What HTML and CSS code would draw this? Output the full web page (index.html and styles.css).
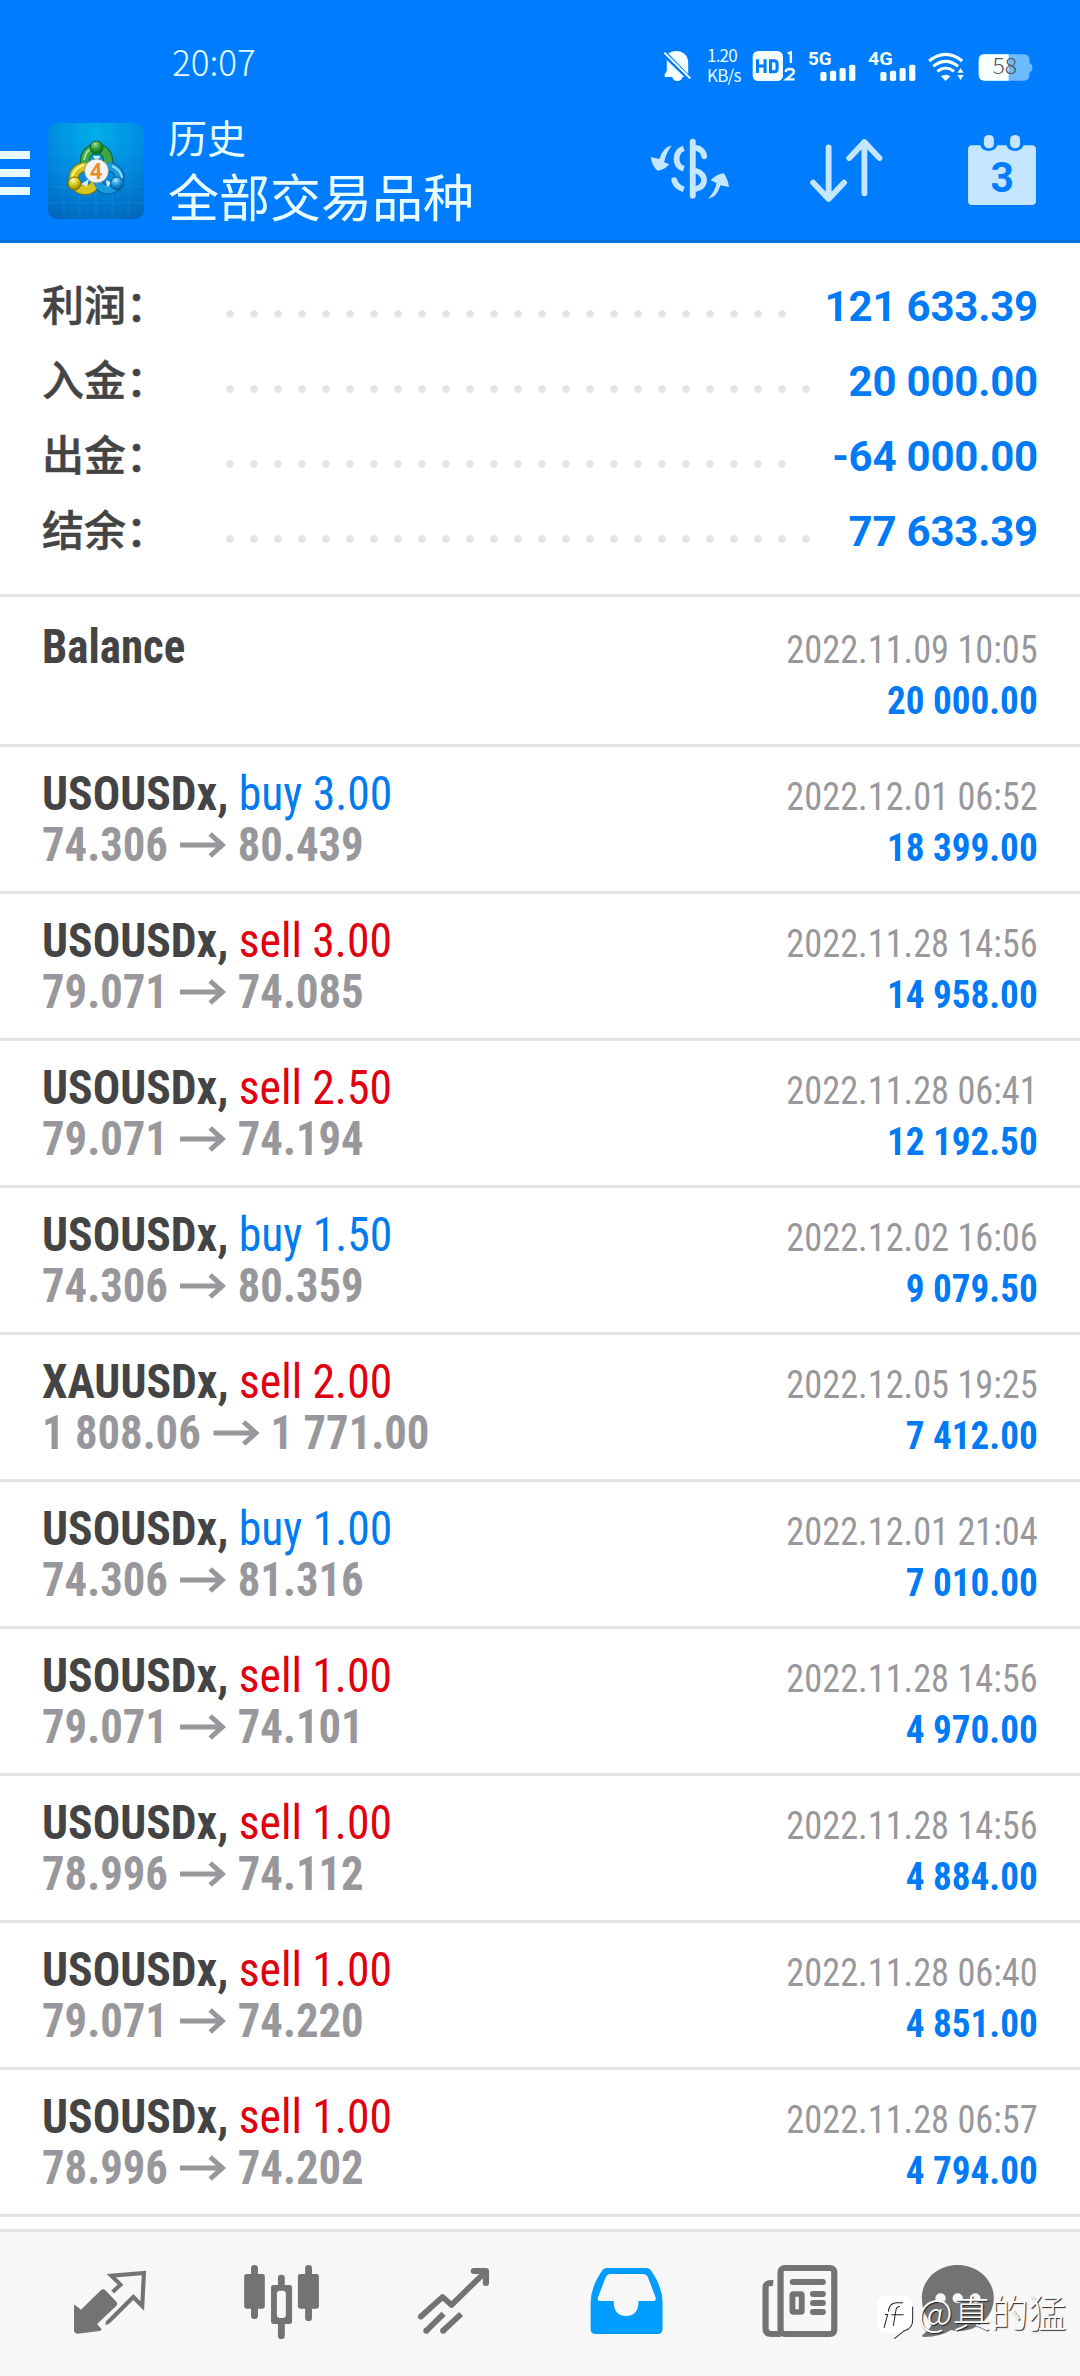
FILE: index.html
```html
<!DOCTYPE html>
<html lang="zh-CN">
<head>
<meta charset="utf-8">
<title>历史</title>
<link rel="stylesheet" href="styles.css">
</head>
<body>
<header class="header">
  <div class="statusbar">
    <span class="clock">20:07</span>
    <div class="status-icons">
      <svg class="i-bell" viewBox="355 150 84 96" preserveAspectRatio="none"><path fill="#f4feff" d="M370 160q26-14 45 0q13 9 13 30v32zM366 180v30q0 8-6 12v9h22q2 12 15 12q12 0 14-12h6z"/><path d="M359 158l75 77" stroke="#f4feff" stroke-width="6"/></svg>
      <div class="speed"><span>1.20</span><span>KB/s</span></div>
      <svg class="i-hd" viewBox="616 150 128 96" preserveAspectRatio="none"><rect x="618" y="153" width="88" height="90" rx="16" fill="#f4feff"/><path d="M632 178v41M654 178v41M632 198h22M670 182v33h10q9 0 9-9v-15q0-9-9-9z" fill="none" stroke="#007dff" stroke-width="9"/><path d="M720 160l9-3v32M714 216q0-9 12-9t12 8q0 6-8 11l-14 12h24" fill="none" stroke="#f4feff" stroke-width="7"/></svg>
      <svg class="i-sig" viewBox="774 150 140 96" preserveAspectRatio="none"><text x="774" y="196" class="net" textLength="69" lengthAdjust="spacingAndGlyphs">5G</text><g fill="#f4feff"><rect x="810" y="216" width="18" height="27" rx="5"/><rect x="838" y="212" width="18" height="31" rx="5"/><rect x="866" y="204" width="18" height="39" rx="5"/><rect x="894" y="194" width="18" height="49" rx="5"/></g></svg>
      <svg class="i-sig" viewBox="774 150 140 96" preserveAspectRatio="none"><text x="774" y="196" class="net" textLength="72" lengthAdjust="spacingAndGlyphs">4G</text><g fill="#f4feff"><rect x="810" y="216" width="18" height="27" rx="5"/><rect x="838" y="212" width="18" height="31" rx="5"/><rect x="866" y="204" width="18" height="39" rx="5"/><rect x="894" y="194" width="18" height="49" rx="5"/></g></svg>
      <svg class="i-wifi" viewBox="1122 150 110 96" preserveAspectRatio="none"><g fill="none" stroke="#f4feff" stroke-width="9"><path d="M1128 183q48-40 96 0"/><path d="M1140 199q36-30 72 0"/><path d="M1152 214q24-20 48 0"/></g><path fill="#f4feff" d="M1162 229q14-10 28 0l-14 14zM1210 218l9-14 9 14zM1210 225h18l-9 15z"/></svg>
      <svg class="i-bat" viewBox="1270 158 160 88" preserveAspectRatio="none"><path d="M1290 162h112q18 0 18 18v10q8 0 8 12q0 14-8 14v8q0 18-18 18h-112q-18 0-18-18v-44q0-18 18-18z" fill="#6dbbff"/><path d="M1359 162h-69q-18 0-18 18v44q0 18 18 18h69z" fill="#f8ffff"/><text x="1312" y="221" class="pct" textLength="72" lengthAdjust="spacingAndGlyphs">58</text></svg>
    </div>
  </div>
  <div class="toolbar">
    <div class="burger"><i></i><i></i><i></i></div>
    <svg class="appicon" viewBox="0 0 96 96">
      <defs>
        <radialGradient id="bg" cx=".5" cy=".08" r="1"><stop offset="0" stop-color="#00aeea"/><stop offset=".5" stop-color="#008be0"/><stop offset="1" stop-color="#0067bd"/></radialGradient>
        <radialGradient id="gr" cx=".4" cy=".25" r=".8"><stop offset="0" stop-color="#a4e09a"/><stop offset=".5" stop-color="#2a9a34"/><stop offset="1" stop-color="#0c5c18"/></radialGradient>
        <radialGradient id="ye" cx=".4" cy=".25" r=".8"><stop offset="0" stop-color="#fffbb0"/><stop offset=".5" stop-color="#d4c410"/><stop offset="1" stop-color="#7d7000"/></radialGradient>
        <radialGradient id="bl" cx=".4" cy=".25" r=".8"><stop offset="0" stop-color="#a5e2ff"/><stop offset=".5" stop-color="#1693dc"/><stop offset="1" stop-color="#05508f"/></radialGradient>
      </defs>
      <rect width="96" height="96" rx="9" fill="url(#bg)"/>
      <path d="M16 0v96M32 0v96M48 0v96M64 0v96M80 0v96M0 16h96M0 32h96M0 48h96M0 64h96M0 80h96" stroke="#55c8ff" stroke-opacity=".13" stroke-width="1"/>
      <g fill="none">
        <g stroke-width="10"><circle cx="48.500" cy="37" r="11.500" stroke="#0b6424"/><circle cx="37" cy="55.500" r="11.500" stroke="#77740d"/><circle cx="60" cy="55" r="11.500" stroke="#075b98"/></g>
        <g stroke-width="8"><circle cx="48.500" cy="37" r="11.500" stroke="#3fa548"/><circle cx="37" cy="55.500" r="11.500" stroke="#d6c51b"/><circle cx="60" cy="55" r="11.500" stroke="#1a9ade"/></g>
        <path d="M36 37q2-11 10-12" stroke="#9fe0a0" stroke-width="2"/><path d="M24 54q3-10 12-12" stroke="#fff79a" stroke-width="2"/><path d="M64 43q9 4 10 12" stroke="#8fdcff" stroke-width="2"/>
      </g>
      <path d="M45 33l3.500 6 4-6zM33 61l8-5-2 8zM58 57l6 3-5 4z" fill="#fff" fill-opacity=".85"/>
      <g stroke-width="1">
        <circle cx="48.500" cy="24.500" r="6.500" fill="url(#gr)" stroke="#0b6424"/>
        <circle cx="26.500" cy="60.500" r="6.500" fill="url(#ye)" stroke="#77740d"/>
        <circle cx="69" cy="60.500" r="6.500" fill="url(#bl)" stroke="#075b98"/>
      </g>
      <circle cx="48.500" cy="48" r="12" fill="#f1f3f5" stroke="#888" stroke-width=".7"/>
      <text x="48" y="56" class="four">4</text>
    </svg>
    <div class="titles"><span class="t1">历史</span><span class="t2">全部交易品种</span></div>
    <svg class="i-dollar" viewBox="320 415 232 186" preserveAspectRatio="none"><g fill="none" stroke="#c4e6ff" stroke-width="17"><path d="M444 426v162" stroke-linecap="round"/><path d="M450 444q25 4 27 26" stroke-linecap="round"/><path d="M418 446q-21 7-21 31t21 30M418 569q-22-7-28-28"/><path d="M450 512q27 9 27 30t-27 27"/></g><circle cx="390" cy="541" r="8" fill="#c4e6ff"/><path fill="#c4e6ff" d="M383 438q-24 2-36 40l-25-6q3 26 20 41q20-2 34-19l-15-6q4-26 22-50zM488 597q26-2 36-40l25 5q-3-24-15-41q-22 3-38 21l17 8q-4 26-25 47z"/></svg>
    <svg class="i-sort" viewBox="780 415 218 194" preserveAspectRatio="none"><path d="M837 443v150M792 548l45 49 45-49M941 580V430M897 475l44-48 44 48" fill="none" stroke="#c4e6ff" stroke-width="17" stroke-linecap="round" stroke-linejoin="round"/></svg>
    <svg class="i-cal" viewBox="1240 402 203 216" preserveAspectRatio="none"><path fill="#c4e6ff" d="M1255 436h23q6 17 25 17t25-17h26q6 17 25 17t25-17h24q12 0 12 12v155q0 12-12 12h-173q-12 0-12-12v-155q0-12 12-12z"/><rect x="1289" y="405" width="29" height="40" rx="14" fill="#c4e6ff"/><rect x="1365" y="405" width="29" height="40" rx="14" fill="#c4e6ff"/><text x="1308" y="577" class="day" textLength="68" lengthAdjust="spacingAndGlyphs">3</text></svg>
  </div>
</header>
<section class="summary">
  <div class="sum"><b>利润：</b><i></i><strong>121 633.39</strong></div>
  <div class="sum"><b>入金：</b><i></i><strong>20 000.00</strong></div>
  <div class="sum"><b>出金：</b><i></i><strong>-64 000.00</strong></div>
  <div class="sum"><b>结余：</b><i></i><strong>77 633.39</strong></div>
</section>
<svg class="defs" width="0" height="0"><symbol id="arrow" viewBox="0 0 46 26" preserveAspectRatio="none"><path d="M0 13h42M30 2l12 11-12 11" fill="none" stroke="currentColor" stroke-width="5"/></symbol></svg>
<main class="list">
  <div class="row first"><div class="l"><p class="op"><b>Balance</b></p></div><div class="r"><p class="date">2022.11.09 10:05</p><p class="amt">20 000.00</p></div></div>
  <div class="row"><div class="l"><p class="deal"><b>USOUSDx,</b> <span class="buy">buy 3.00</span></p><p class="price">74.306<svg><use href="#arrow"/></svg>80.439</p></div><div class="r"><p class="date">2022.12.01 06:52</p><p class="amt">18 399.00</p></div></div>
  <div class="row"><div class="l"><p class="deal"><b>USOUSDx,</b> <span class="sell">sell 3.00</span></p><p class="price">79.071<svg><use href="#arrow"/></svg>74.085</p></div><div class="r"><p class="date">2022.11.28 14:56</p><p class="amt">14 958.00</p></div></div>
  <div class="row"><div class="l"><p class="deal"><b>USOUSDx,</b> <span class="sell">sell 2.50</span></p><p class="price">79.071<svg><use href="#arrow"/></svg>74.194</p></div><div class="r"><p class="date">2022.11.28 06:41</p><p class="amt">12 192.50</p></div></div>
  <div class="row"><div class="l"><p class="deal"><b>USOUSDx,</b> <span class="buy">buy 1.50</span></p><p class="price">74.306<svg><use href="#arrow"/></svg>80.359</p></div><div class="r"><p class="date">2022.12.02 16:06</p><p class="amt">9 079.50</p></div></div>
  <div class="row"><div class="l"><p class="deal"><b>XAUUSDx,</b> <span class="sell">sell 2.00</span></p><p class="price">1 808.06<svg><use href="#arrow"/></svg>1 771.00</p></div><div class="r"><p class="date">2022.12.05 19:25</p><p class="amt">7 412.00</p></div></div>
  <div class="row"><div class="l"><p class="deal"><b>USOUSDx,</b> <span class="buy">buy 1.00</span></p><p class="price">74.306<svg><use href="#arrow"/></svg>81.316</p></div><div class="r"><p class="date">2022.12.01 21:04</p><p class="amt">7 010.00</p></div></div>
  <div class="row"><div class="l"><p class="deal"><b>USOUSDx,</b> <span class="sell">sell 1.00</span></p><p class="price">79.071<svg><use href="#arrow"/></svg>74.101</p></div><div class="r"><p class="date">2022.11.28 14:56</p><p class="amt">4 970.00</p></div></div>
  <div class="row"><div class="l"><p class="deal"><b>USOUSDx,</b> <span class="sell">sell 1.00</span></p><p class="price">78.996<svg><use href="#arrow"/></svg>74.112</p></div><div class="r"><p class="date">2022.11.28 14:56</p><p class="amt">4 884.00</p></div></div>
  <div class="row"><div class="l"><p class="deal"><b>USOUSDx,</b> <span class="sell">sell 1.00</span></p><p class="price">79.071<svg><use href="#arrow"/></svg>74.220</p></div><div class="r"><p class="date">2022.11.28 06:40</p><p class="amt">4 851.00</p></div></div>
  <div class="row"><div class="l"><p class="deal"><b>USOUSDx,</b> <span class="sell">sell 1.00</span></p><p class="price">78.996<svg><use href="#arrow"/></svg>74.202</p></div><div class="r"><p class="date">2022.11.28 06:57</p><p class="amt">4 794.00</p></div></div>
</main>
<nav class="tabs">
  <svg viewBox="0 126 522.670 432" preserveAspectRatio="none"><path fill="#737373" d="M215 344q3 0 20 15l58-58q6-7 13 0l32 34q5 6 0 12l-56 55 13 16q0 4-6 5l-64 8q-10 0-10-10z"/><path d="M327 306l23-22-27-27 95-8-5 99-26-27-70 72q-4 6-10 5" fill="none" stroke="#737373" stroke-width="12"/></svg>
  <svg viewBox="522.670 126 522.670 432" preserveAspectRatio="none"><g fill="#737373"><rect x="709" y="252" width="60" height="104" rx="7"/><rect x="729" y="225" width="20" height="162" rx="10"/><rect x="865" y="252" width="61" height="104" rx="7"/><rect x="886" y="225" width="20" height="168" rx="10"/><rect x="787" y="285" width="61" height="117" rx="7"/><rect x="807" y="254" width="20" height="193" rx="10"/></g><rect x="804" y="302" width="26" height="82" rx="9" fill="#f7f7f7"/></svg>
  <svg viewBox="1045.330 126 522.670 432" preserveAspectRatio="none"><g fill="none" stroke="#737373" stroke-width="17"><path d="M1222 380l63-59 26 24 98-99" stroke-linejoin="round" stroke-linecap="round"/><path d="M1376 243h35v36" stroke-linecap="round" stroke-linejoin="round" stroke-width="18"/><path d="M1288 371l-50 51M1339 372l-52 50"/></g><circle cx="1238" cy="422" r="9" fill="#737373"/><circle cx="1287" cy="422" r="9" fill="#737373"/></svg>
  <svg viewBox="0 126 522.670 432" preserveAspectRatio="none"><path fill="#009dff" d="M194 234h114q10 0 16 10q32 48 32 95v78q0 15-14 15H161q-14 0-14-15v-78q0-47 32-95q6-10 15-10z"/><path fill="#f7f7f7" d="M203 252h94q12 0 16 9l23 62q2 10-8 10h-42q0 45-36 45t-36-45h-38q-10 0-8-10l23-62q4-9 12-9z"/></svg>
  <svg viewBox="522.670 126 522.670 432" preserveAspectRatio="none"><g fill="none" stroke="#737373"><rect x="698.500" y="234" width="156" height="198" rx="12" stroke-width="18"/><path d="M677 279q-22-2-22 14v122q0 17 16 17h28" stroke-width="18"/><path d="M734 276h87M793 312h28M793 339h28M793 366h28" stroke-width="18" stroke-linecap="round"/><rect x="733" y="312" width="27" height="54" rx="3" stroke-width="17"/></g></svg>
  <svg viewBox="1045.330 126 522.670 432" preserveAspectRatio="none"><path transform="translate(522.670)" fill="#737373" d="M690 225c58 0 105 44 105 99s-45 99-100 99q-12 0-24-3q-30 20-77 21q-12-1-4-8q18-14 26-31q-30-30-30-78c0-55 46-99 104-99z" class="bubble"/><g fill="#f7f7f7"><circle cx="1163" cy="325" r="15"/><circle cx="1213" cy="325" r="15"/><circle cx="1264" cy="325" r="15"/></g></svg>
</nav>
<div class="watermark">
  <svg viewBox="20 136 114 134" preserveAspectRatio="none"><path fill="#fff" d="M48 139h52q30 0 30 32v38q0 26-26 34l-28 23 4-16H52q-30 0-30-32v-44q0-35 26-35z"/><path d="M44 234l11-40h-8M57 186q2-26 24-27h20M66 195h37M92 170q-10 0-12 10l-8 48M130 170v42q0 24-26 31l-29 23" fill="none" stroke="#222" stroke-width="3"/></svg>
  <span>@真的猛</span>
</div>
</body>
</html>
```
FILE: styles.css
```css
* { box-sizing: border-box; margin: 0; padding: 0; }
body {
  width: 1080px; height: 2376px; position: relative; overflow: hidden;
  display: flex; flex-direction: column;
  background: #fff; color: #444;
  font-family: Roboto, "Noto Sans CJK SC", sans-serif;
}
svg { display: block; flex: none; overflow: visible; }
.defs { position: absolute; }

.header { height: 243px; flex: none; background: #007dff; border-bottom: 3px solid #0070d6; }
.statusbar { height: 100px; padding: 0 47px 0 172px; display: flex; justify-content: space-between; }
.clock { font: 300 35px/50px "Noto Sans CJK SC", sans-serif; color: #e2fcff; padding-top: 36px; }
.status-icons { display: flex; align-items: flex-start; padding-top: 50px; }
.i-bell { width: 29px; height: 32px; }
.speed {
  width: 31px; margin: -5px 0 0 15px; display: flex; flex-direction: column;
  font: 400 17px/20px "Noto Sans CJK SC", sans-serif; letter-spacing: -.8px; color: #e2fcff; white-space: nowrap;
}
.i-hd { width: 44px; height: 32px; margin-left: 14px; }
.i-sig { width: 48px; height: 32px; margin-left: 12px; }
.i-wifi { width: 38px; height: 32px; margin-left: 11px; }
.i-bat { width: 55px; height: 29px; margin: 3px 0 0 13px; }
.net { font: 700 56px Roboto, sans-serif; fill: #f4feff; }
.pct { font: 300 66px "Noto Sans CJK SC", sans-serif; fill: #555; }

.toolbar { height: 140px; display: flex; align-items: flex-start; }
.burger { width: 30px; padding-top: 51px; display: flex; flex-direction: column; gap: 10px; }
.burger i { height: 8px; background: #e8fbff; }
.appicon { width: 96px; height: 96px; margin: 23px 0 0 18px; }
.four { font: 700 22px Roboto, sans-serif; fill: #f28c28; text-anchor: middle; }
.titles { width: 340px; margin-left: 24px; padding-top: 9px; display: flex; flex-direction: column; font-family: "Noto Sans CJK SC", sans-serif; font-weight: 400; color: #e8fdff; }
.t1 { font-size: 39px; line-height: 54px; }
.t2 { font-size: 51px; line-height: 64px; }
.i-dollar { width: 80px; height: 62px; margin: 38px 0 0 142px; }
.i-sort { width: 75px; height: 65px; margin: 38px 0 0 79px; }
.i-cal { width: 70px; height: 72px; margin: 34px 0 0 83px; }
.day { font: 700 130px Roboto, sans-serif; fill: #007dff; }

.summary { height: 354px; flex: none; padding: 26px 42px 0; border-bottom: 3px solid #e4e4e4; }
.sum { height: 75px; display: flex; align-items: center; }
.sum b { width: 176px; margin-top: -8px; font: 500 42px/67px "Noto Sans CJK SC", sans-serif; -webkit-text-stroke: .5px #444; }
.sum i {
  flex: 1; height: 8px; margin: 15px 33px 0 0;
  background: radial-gradient(circle at 12px 4px, #e4e4e4 3.4px, transparent 4.2px) 0 0 / 24px 8px repeat-x;
}
.sum strong { font: 700 42px/75px Roboto, sans-serif; letter-spacing: -.2px; color: #007bf5; }

/* Narrow figures: each kind of line is condensed a little further, towards its own margin. */
.list { flex: 1; overflow: hidden; font-family: "Roboto Condensed", Roboto, sans-serif; font-stretch: 75%; }
.row { height: 147px; padding: 21px 42px 0; display: flex; justify-content: space-between; border-bottom: 3px solid #e4e4e4; }
.row.first { height: 150px; padding-top: 24px; }
.l p { font-size: 48px; line-height: 51px; white-space: nowrap; transform-origin: 0 50%; }
.l .op { transform: scaleX(.937); }
.l .deal { transform: scaleX(.95); }
.r { padding-top: 4px; }
.r p { font-size: 39px; line-height: 51px; color: #98989c; white-space: nowrap; text-align: right; transform-origin: 100% 50%; }
.r .date { transform: scaleX(.932); }
.buy { color: #007bf0; }
.sell { color: #e0000f; }
.l .price { display: flex; align-items: center; font-weight: 700; color: #98989c; transform: scaleX(.931); }
.price svg { width: 50px; height: 26px; margin: 0 12px 0 13px; }
.r .amt { font-weight: 700; color: #007bf5; transform: scaleX(.952); }

.tabs { height: 147px; flex: none; border-top: 3px solid #e4e4e4; background: #f7f7f7; display: grid; grid-template-columns: repeat(6, 180px); }
.tabs svg { width: 180px; height: 144px; }

.watermark { position: absolute; left: 876px; top: 2295px; display: flex; }
.watermark svg { width: 38px; height: 45px; }
.watermark span { margin: -3px 0 0 4px; font: 300 38px/38px "Noto Sans CJK SC", sans-serif; color: #fff; text-shadow: 1px 1px 1px #222; white-space: nowrap; }
```
